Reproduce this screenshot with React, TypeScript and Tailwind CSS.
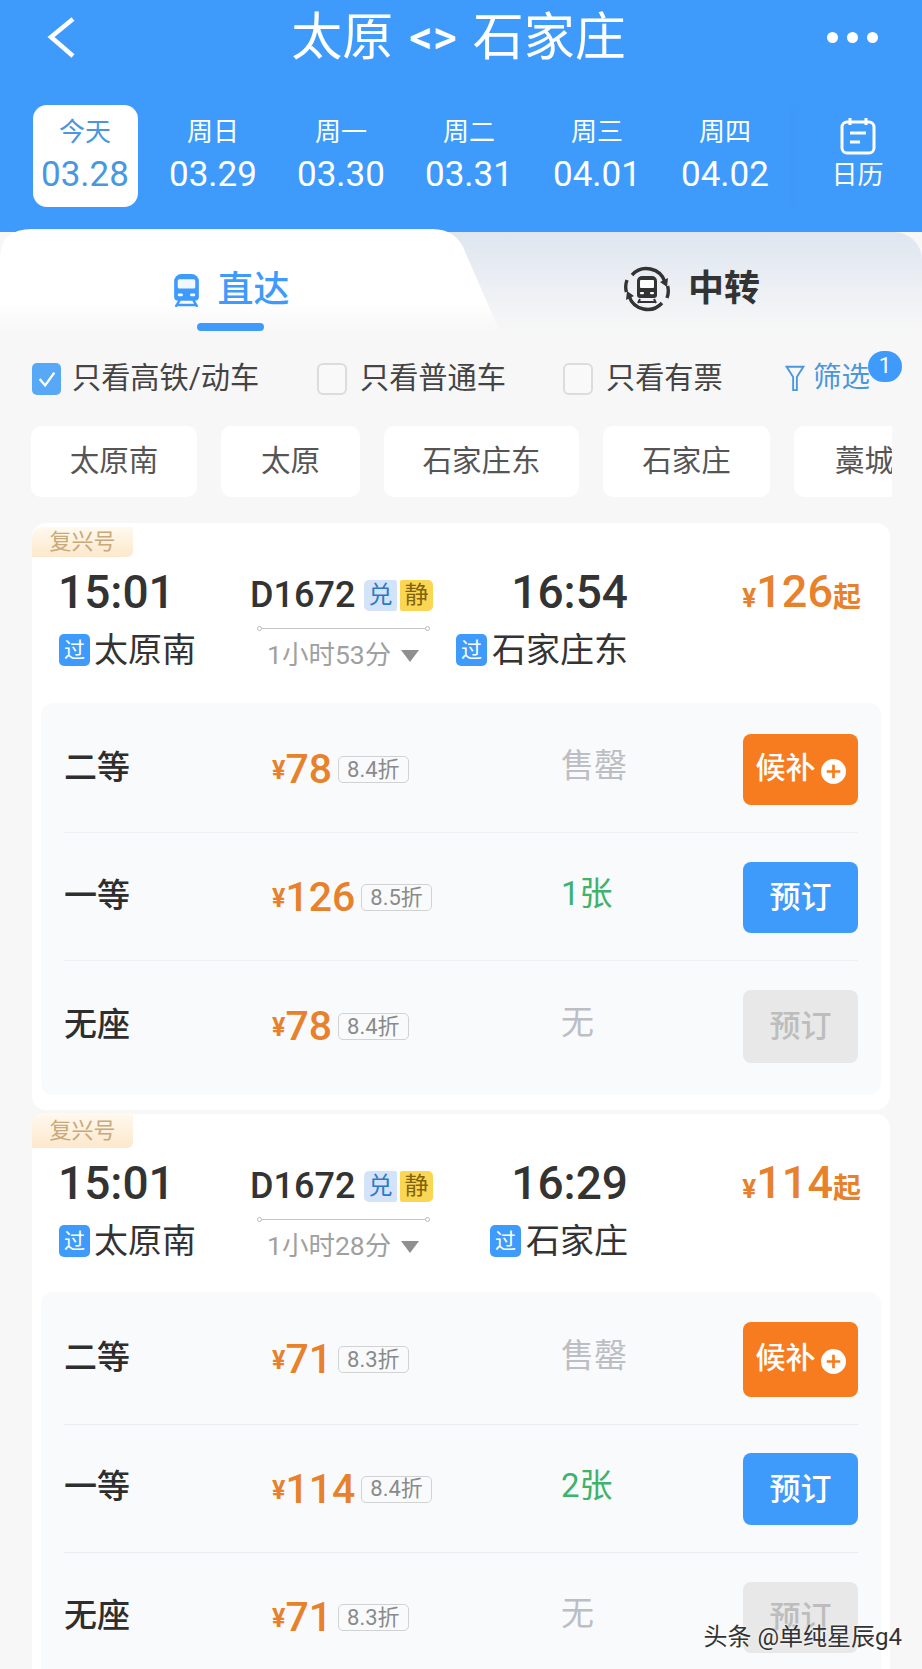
import { Fragment } from "react";

type SeatRow = {
  label: string;
  price: string;
  discount: string;
  status: string;
  statusClass: string;
  action: "wait" | "book" | "off";
  rowClass: string;
  btnClass: string;
};

type TrainCard = {
  depart: string;
  arrive: string;
  from: string;
  to: string;
  duration: string;
  lowest: string;
  cardClass: string;
  badgeClass: string;
  topClass: string;
  rows: SeatRow[];
};

const dates = [
  { week: "周日", day: "03.29" },
  { week: "周一", day: "03.30" },
  { week: "周二", day: "03.31" },
  { week: "周三", day: "04.01" },
  { week: "周四", day: "04.02" },
];

const cards: TrainCard[] = [
  {
    depart: "15:01",
    arrive: "16:54",
    from: "太原南",
    to: "石家庄东",
    duration: "1小时53分",
    lowest: "126",
    cardClass: "mb-[4px]",
    badgeClass: "top-[4px] h-[30px]",
    topClass: "h-[180px]",
    rows: [
      { label: "二等", price: "78", discount: "8.4折", status: "售罄", statusClass: "text-[#bcbec4]", action: "wait", rowClass: "h-[130px] pt-[31px] border-b border-[#eef0f3]", btnClass: "h-[71px]" },
      { label: "一等", price: "126", discount: "8.5折", status: "1张", statusClass: "text-[#3fb26d]", action: "book", rowClass: "h-[128px] pt-[29px] border-b border-[#eef0f3]", btnClass: "h-[71px]" },
      { label: "无座", price: "78", discount: "8.4折", status: "无", statusClass: "text-[#bcbec4]", action: "off", rowClass: "h-[134px] pt-[29px]", btnClass: "h-[73px]" },
    ],
  },
  {
    depart: "15:01",
    arrive: "16:29",
    from: "太原南",
    to: "石家庄",
    duration: "1小时28分",
    lowest: "114",
    cardClass: "",
    badgeClass: "-top-[1px] h-[35px]",
    topClass: "h-[178px]",
    rows: [
      { label: "二等", price: "71", discount: "8.3折", status: "售罄", statusClass: "text-[#bcbec4]", action: "wait", rowClass: "h-[133px] pt-[30px] border-b border-[#e9ecf0]", btnClass: "h-[75px]" },
      { label: "一等", price: "114", discount: "8.4折", status: "2张", statusClass: "text-[#3fb26d]", action: "book", rowClass: "h-[128px] pt-[28px] border-b border-[#e9ecf0]", btnClass: "h-[72px]" },
      { label: "无座", price: "71", discount: "8.3折", status: "无", statusClass: "text-[#bcbec4]", action: "off", rowClass: "h-[135px] pt-[29px]", btnClass: "h-[71px]" },
    ],
  },
];

const stations = [
  { name: "太原南", width: "w-[166px]" },
  { name: "太原", width: "w-[139px]" },
  { name: "石家庄东", width: "w-[195px]" },
  { name: "石家庄", width: "w-[167px]" },
];

function TrainIcon({ className, color }: { className: string; color: string }) {
  return (
    <svg viewBox="3 1 26 33" className={className} fill="none">
      <path d="M4 9a7 7 0 0 1 7-7h10a7 7 0 0 1 7 7v15a4 4 0 0 1-4 4H8a4 4 0 0 1-4-4V9z" fill={color} />
      <rect x="7.5" y="7" width="17" height="9" rx="1.5" fill="#ffffff" opacity="0.92" />
      <rect x="7.5" y="21" width="5" height="2.6" rx="1.3" fill="#ffffff" />
      <rect x="19.5" y="21" width="5" height="2.6" rx="1.3" fill="#ffffff" />
      <path d="M9 28l-3 5M23 28l3 5M7 32h18" stroke={color} strokeWidth="2.4" strokeLinecap="round" />
    </svg>
  );
}

function TransferIcon() {
  return (
    <svg viewBox="0 0 48 48" className="h-[48px] w-[48px]" fill="none">
      <path d="M42 17A19.5 19.5 0 0 0 9 10" stroke="#333" strokeWidth="3.4" />
      <path d="M6 31a19.5 19.5 0 0 0 33 7" stroke="#333" strokeWidth="3.4" />
      <path d="M4 15a19.5 19.5 0 0 0-.6 12" stroke="#333" strokeWidth="3.4" />
      <path d="M44 33a19.5 19.5 0 0 0 .6-12" stroke="#333" strokeWidth="3.4" />
      <path d="M45 13l-1 9-7-5zM3 35l1-9 7 5z" fill="#333" />
      <path d="M14 16a5 5 0 0 1 5-5h10a5 5 0 0 1 5 5v14a3 3 0 0 1-3 3H17a3 3 0 0 1-3-3V16z" fill="#333" />
      <rect x="17" y="15" width="14" height="8" rx="1" fill="#fff" />
      <rect x="17" y="27" width="4" height="2.2" rx="1" fill="#fff" />
      <rect x="27" y="27" width="4" height="2.2" rx="1" fill="#fff" />
      <path d="M17 34l-2 4M31 34l2 4M16 37h16" stroke="#333" strokeWidth="2" />
    </svg>
  );
}

function CheckBox({ checked }: { checked?: boolean }) {
  if (checked) {
    return (
      <span className="flex h-[32px] w-[29px] items-center justify-center rounded-[5px] bg-[#58a8f8]">
        <svg viewBox="0 0 24 24" className="h-[24px] w-[22px]" fill="none" stroke="#fff" strokeWidth="2.6">
          <path d="M4 12l6 7L20 5" />
        </svg>
      </span>
    );
  }
  return <span className="h-[32px] w-[30px] rounded-[6px] border-2 border-[#dcdcdc] bg-[#f9f9f9]" />;
}

function SeatAction({ action, className }: { action: SeatRow["action"]; className: string }) {
  if (action === "wait") {
    return (
      <div className={`flex w-[115px] items-center justify-center gap-[5px] rounded-[8px] bg-[#f67c1f] ${className}`}>
        <span className="mb-[3px] text-[30px] leading-none font-medium text-white">候补</span>
        <svg viewBox="0 0 24 24" className="mt-[4px] h-[25px] w-[25px]">
          <circle cx="12" cy="12" r="12" fill="#fff" />
          <path d="M12 5.5v13M5.5 12h13" stroke="#f67c1f" strokeWidth="2.6" />
        </svg>
      </div>
    );
  }
  const tone = action === "book" ? "bg-[#3f9bfb] text-white" : "bg-[#e8e8e8] text-[#bdbdbd]";
  return (
    <div className={`flex w-[115px] items-center justify-center rounded-[8px] text-[31px] leading-none font-medium ${tone} ${className}`}>
      预订
    </div>
  );
}

function Card({ card }: { card: TrainCard }) {
  return (
    <div className={`relative rounded-[14px] bg-white px-[9px] pb-[15px] ${card.cardClass}`}>
      <div className={`absolute left-0 flex w-[101px] items-center justify-center rounded-tl-[10px] rounded-br-[6px] bg-gradient-to-b from-[#fff9ef] to-[#fce8cc] text-[22px] leading-none text-[#c8a97a] ${card.badgeClass}`}>
        复兴号
      </div>
      <div className={`-mx-[9px] flex pt-[45px] pl-[27px] ${card.topClass}`}>
        <div className="w-[191px]">
          <div className="-ml-[1px] text-[46px] leading-[48px] font-medium text-[#333]">{card.depart}</div>
          <div className="mt-[17px] flex h-[34px] items-center gap-[4px]">
            <span className="flex h-[32px] w-[31px] items-center justify-center rounded-[5px] bg-[#3f9bfb] text-[21px] leading-none text-white">过</span>
            <span className="text-[34px] leading-none text-[#333]">{card.from}</span>
          </div>
        </div>
        <div className="w-[200px]">
          <div className="mt-[12px] flex h-[30px] items-center">
            <span className="w-[114px] text-[36px] leading-none font-medium text-[#333]">D1672</span>
            <span className="flex h-[31px] w-[33px] items-center justify-center rounded-l-[5px] rounded-r-[2px] bg-[#d3e4fa] text-[24px] leading-none text-[#2f78c4]">兑</span>
            <span className="ml-[3px] flex h-[31px] w-[33px] items-center justify-center rounded-l-[2px] rounded-r-[5px] bg-[#fbd653] text-[24px] leading-none text-[#80640c]">静</span>
          </div>
          <div className="mt-[16px] ml-[7px] flex h-[4px] w-[173px] items-center">
            <span className="h-[5px] w-[5px] rounded-full border border-[#bbb]" />
            <span className="h-px flex-1 bg-[#c4c4c4]" />
            <span className="h-[5px] w-[5px] rounded-full border border-[#bbb]" />
          </div>
          <div className="mt-[8px] ml-[17px] flex h-[34px] items-center">
            <span className="text-[26.5px] leading-none text-[#a0a0a0]">{card.duration}</span>
            <span className="mt-[2px] ml-[10px] h-0 w-0 border-x-[9px] border-t-[12px] border-x-transparent border-t-[#8f8f8f]" />
          </div>
        </div>
        <div className="flex w-[178px] flex-col items-end">
          <div className="text-[46px] leading-[48px] font-medium text-[#333]">{card.arrive}</div>
          <div className="mt-[17px] flex h-[34px] items-center gap-[5px]">
            <span className="flex h-[32px] w-[31px] items-center justify-center rounded-[5px] bg-[#3f9bfb] text-[21px] leading-none text-white">过</span>
            <span className="text-[34px] leading-none text-[#333]">{card.to}</span>
          </div>
        </div>
        <div className="flex flex-1 items-baseline justify-end pr-[29px] text-[#e8812b]">
          <span className="text-[26px] leading-[48px] font-bold">¥</span>
          <span className="text-[45px] leading-[48px] font-medium">{card.lowest}</span>
          <span className="text-[28px] leading-[48px] font-bold">起</span>
        </div>
      </div>
      <div className="rounded-[12px] bg-[#f9fafc] px-[23px]">
        {card.rows.map((row) => (
          <Fragment key={row.label}>
            <div className={`grid grid-cols-[208px_289px_182px_115px] items-start ${row.rowClass}`}>
              <div className={`flex items-center pb-[5px] text-[33px] leading-none font-medium text-[#2e2e2e] ${row.btnClass}`}>{row.label}</div>
              <div className={`flex items-center ${row.btnClass}`}>
                <span className="mt-[3px] text-[25px] font-bold text-[#e8812b]">¥</span>
                <span className="text-[41px] leading-none font-medium text-[#e8812b]">{row.price}</span>
                <span className="ml-[6px] flex h-[27px] items-center rounded-[5px] border border-[#d2d2d2] px-[8px] text-[22px] leading-none text-[#8a8a8a]">{row.discount}</span>
              </div>
              <div className={`flex items-center pb-[8px] text-[33px] leading-none ${row.statusClass} ${row.btnClass}`}>{row.status}</div>
              <SeatAction action={row.action} className={row.btnClass} />
            </div>
          </Fragment>
        ))}
      </div>
    </div>
  );
}

export default function App() {
  return (
    <div className="relative h-[1669px] w-[922px] overflow-hidden bg-[#f7f7f7] font-['Roboto','Noto_Sans_CJK_SC',sans-serif]">
      <header className="h-[232px] bg-[#3f9bfb] text-white">
        <div className="flex h-[74px] items-center justify-between pr-[44px] pl-[46px]">
          <svg viewBox="0 0 30 42" className="h-[42px] w-[30px]" fill="none" stroke="#fff" strokeWidth="4.5">
            <path d="M27 3L5 21l22 19" />
          </svg>
          <div className="ml-[14px] flex items-center text-[51px] leading-none">
            <span>太原</span>
            <span className="mx-[16px] text-[46px] leading-none font-medium">&lt;&gt;</span>
            <span>石家庄</span>
          </div>
          <div className="flex gap-[9px]">
            <span className="h-[11px] w-[11px] rounded-full bg-white" />
            <span className="h-[11px] w-[11px] rounded-full bg-white" />
            <span className="h-[11px] w-[11px] rounded-full bg-white" />
          </div>
        </div>
        <div className="mt-[31px] flex pl-[21px]">
          <div className="flex w-[128px] justify-center">
            <div className="flex h-[102px] w-[105px] flex-col items-center rounded-[14px] bg-white pt-[12px] text-[#4a97e0]">
              <span className="text-[26px] leading-[30px]">今天</span>
              <span className="mt-[10px] text-[35px] leading-[36px]">03.28</span>
            </div>
          </div>
          {dates.map((d) => (
            <div key={d.day} className="flex w-[128px] flex-col items-center pt-[12px]">
              <span className="text-[26px] leading-[30px]">{d.week}</span>
              <span className="mt-[10px] text-[35px] leading-[36px]">{d.day}</span>
            </div>
          ))}
          <div className="flex w-[105px] flex-col items-center bg-gradient-to-r from-[#3d98f8] to-[#3f9bfb] to-[15%] pt-[12px] pl-[32px]">
            <svg viewBox="0 0 36 38" className="h-[38px] w-[36px]" fill="none" stroke="#fff" strokeWidth="3">
              <rect x="2" y="5" width="32" height="31" rx="5" />
              <path d="M10 1v7M26 1v7M10 16h16M10 25h10" />
            </svg>
            <span className="mt-[7px] text-[26px] leading-none">日历</span>
          </div>
        </div>
      </header>

      <div className="flex h-[100px] rounded-t-[28px] bg-gradient-to-b from-[#dfe6f0] to-[#f7f7f7]">
        <div className="-mt-[3px] h-[103px] w-[500px] bg-gradient-to-b from-white from-[70%] to-[#f7f7f7] [clip-path:path('M0_103L0_30Q0_0_32_0L432_0Q458_0_466_25L500_103Z')]">
          <div className="flex h-[103px] items-start justify-center pt-[43px]">
            <div className="relative ml-[-39px] flex items-center gap-[15px]">
              <TrainIcon className="h-[34px] w-[31px]" color="#3f9bfb" />
              <span className="text-[36px] leading-none font-medium text-[#3f9bfb]">直达</span>
              <span className="absolute top-[51px] left-[26px] h-[8px] w-[67px] rounded-full bg-[#3f9bfb]" />
            </div>
          </div>
        </div>
        <div className="flex flex-1 justify-start pt-[33px] pl-[123px]">
          <div className="flex items-center gap-[17px] self-start">
            <TransferIcon />
            <span className="text-[36px] leading-none font-bold text-[#333]">中转</span>
          </div>
        </div>
      </div>

      <div className="mt-[31px] flex h-[32px] items-center pl-[32px] text-[29.2px] leading-none text-[#444]">
        <CheckBox checked />
        <span className="ml-[11px] w-[245px]">只看高铁/动车</span>
        <CheckBox />
        <span className="ml-[13px] w-[203px]">只看普通车</span>
        <CheckBox />
        <span className="ml-[13px] w-[179px]">只看有票</span>
        <div className="relative -mt-[2px] flex items-center text-[28.5px] text-[#4a97e0]">
          <svg viewBox="0 0 20 30" className="h-[28px] w-[20px]" fill="none" stroke="#4a97e0" strokeWidth="2">
            <path d="M1 3h18l-7 11v14h-4V14z" />
          </svg>
          <span className="ml-[8px]">筛选</span>
          <span className="absolute -top-[13px] -right-[32px] flex h-[31px] w-[34px] items-center justify-center rounded-full bg-[#3f9bfb] text-[22px] leading-none text-white">1</span>
        </div>
      </div>

      <div className="mt-[31px] flex h-[71px] w-[892px] gap-[24px] overflow-hidden pl-[31px] text-[29.5px] leading-none text-[#555]">
        {stations.map((s) => (
          <div key={s.name} className={`flex shrink-0 items-center justify-center rounded-[10px] bg-white ${s.width}`}>
            {s.name}
          </div>
        ))}
        <div className="flex w-[120px] shrink-0 items-center rounded-[10px] bg-white pl-[41px]">藁城</div>
      </div>

      <div className="mt-[26px] ml-[32px] w-[858px]">
        {cards.map((card) => (
          <Card key={card.arrive} card={card} />
        ))}
      </div>

      <div className="absolute top-[1622px] right-[20px] text-[24px] leading-[30px] whitespace-nowrap text-[#333] [text-shadow:0_0_3px_#fff]">
        头条 @单纯星辰g4
      </div>
    </div>
  );
}
